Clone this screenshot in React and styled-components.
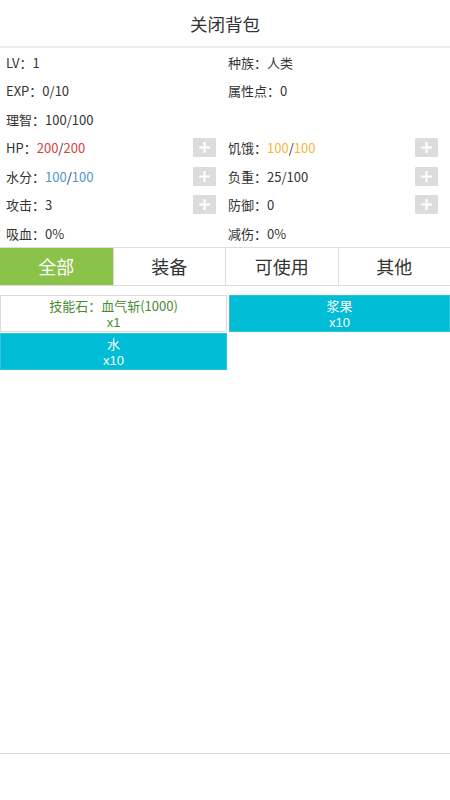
import React, { useState } from "react";
import styled, { createGlobalStyle } from "styled-components";

const Global = createGlobalStyle`
  html, body { margin: 0; padding: 0; background: #fff; }
  body { font-family: "Noto Sans CJK SC", "Noto Sans", sans-serif; color: #333; }
`;

const Page = styled.div`
  width: 450px;
  height: 800px;
  display: flex;
  flex-direction: column;
  background: #fff;
  overflow: hidden;
`;

const Header = styled.div`
  height: 46px;
  display: flex;
  align-items: center;
  justify-content: center;
  font-size: 17.5px;
  color: #333;
  border-bottom: 2px solid #ececec;
`;

const Stats = styled.div`
  display: grid;
  grid-template-columns: 222px 222px;
  grid-auto-rows: 28.5px;
`;

const Cell = styled.div`
  display: flex;
  align-items: center;
  justify-content: space-between;
  padding: 0 6px;
  font-size: 13px;
  color: #333;
`;

const Val = styled.span`
  color: ${(p) => p.$c || "#333"};
`;

const PlusBtn = styled.div`
  width: 23px;
  height: 19px;
  background: #dcdcdc;
  display: flex;
  align-items: center;
  justify-content: center;
  border-radius: 1px;
`;

const Tabs = styled.div`
  display: grid;
  grid-template-columns: repeat(4, 1fr);
  border-top: 1px solid #ddd;
  border-bottom: 1px solid #ddd;
  margin-top: -1px;
`;

const Tab = styled.div`
  height: 37px;
  display: flex;
  align-items: center;
  justify-content: center;
  font-size: 18px;
  color: ${(p) => (p.$active ? "#fff" : "#333")};
  background: ${(p) => (p.$active ? "#8bc34a" : "#fff")};
  border-left: ${(p) => (p.$first ? "none" : "1px solid #ddd")};
`;

const Items = styled.div`
  display: grid;
  grid-template-columns: 227px 221px;
  column-gap: 2px;
  row-gap: 1px;
  margin-top: 9px;
`;

const Item = styled.div`
  height: 37px;
  box-sizing: border-box;
  display: flex;
  flex-direction: column;
  align-items: center;
  justify-content: center;
  font-size: 13px;
  background: ${(p) => (p.$plain ? "#fff" : "#00bcd4")};
  color: ${(p) => (p.$plain ? "#4a8a2e" : "#fff")};
  border: 1px solid ${(p) => (p.$plain ? "#dcdcdc" : "#2cc6da")};
`;

const ItemName = styled.span`
  display: block;
  line-height: 19px;
  height: 19px;
`;

const ItemCount = styled.span`
  display: block;
  font-family: "Liberation Sans", Arial, sans-serif;
  line-height: 15px;
  height: 15px;
`;

const Spacer = styled.div`
  flex: 1;
`;

const Footer = styled.div`
  height: 46px;
  border-top: 1px solid #dcdcdc;
`;

const Plus = () => (
  <PlusBtn>
    <svg width="11" height="11" viewBox="0 0 11 11">
      <rect x="4.5" y="0" width="2" height="11" fill="#fff" />
      <rect x="0" y="4.5" width="11" height="2" fill="#fff" />
    </svg>
  </PlusBtn>
);

const Ratio = ({ a, b, c }) => (
  <>
    <Val $c={c}>{a}</Val>/<Val $c={c}>{b}</Val>
  </>
);

export default function App() {
  const [tab, setTab] = useState(0);
  const tabs = ["全部", "装备", "可使用", "其他"];
  const items = [
    { name: "技能石：血气斩(1000)", count: 1, plain: true },
    { name: "浆果", count: 10 },
    { name: "水", count: 10 },
  ];
  return (
    <Page>
      <Global />
      <Header>关闭背包</Header>
      <Stats>
        <Cell><span>LV：1</span></Cell>
        <Cell><span>种族：人类</span></Cell>
        <Cell><span>EXP：0/10</span></Cell>
        <Cell><span>属性点：0</span></Cell>
        <Cell><span>理智：100/100</span></Cell>
        <Cell />
        <Cell>
          <span>HP：<Ratio a="200" b="200" c="#d8413c" /></span>
          <Plus />
        </Cell>
        <Cell>
          <span>饥饿：<Ratio a="100" b="100" c="#f4b73e" /></span>
          <Plus />
        </Cell>
        <Cell>
          <span>水分：<Ratio a="100" b="100" c="#4d96cf" /></span>
          <Plus />
        </Cell>
        <Cell>
          <span>负重：25/100</span>
          <Plus />
        </Cell>
        <Cell>
          <span>攻击：3</span>
          <Plus />
        </Cell>
        <Cell>
          <span>防御：0</span>
          <Plus />
        </Cell>
        <Cell><span>吸血：0%</span></Cell>
        <Cell><span>减伤：0%</span></Cell>
      </Stats>
      <Tabs>
        {tabs.map((t, i) => (
          <Tab key={t} $first={i === 0} $active={tab === i} onClick={() => setTab(i)}>
            {t}
          </Tab>
        ))}
      </Tabs>
      <Items>
        {items.map((it) => (
          <Item key={it.name} $plain={it.plain}>
            <ItemName>{it.name}</ItemName>
            <ItemCount>x{it.count}</ItemCount>
          </Item>
        ))}
      </Items>
      <Spacer />
      <Footer />
    </Page>
  );
}
